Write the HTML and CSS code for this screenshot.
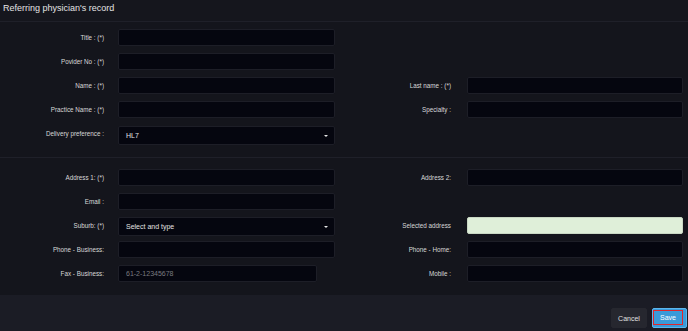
FILE: index.html
```html
<!DOCTYPE html>
<html lang="en">
<head>
  <meta charset="UTF-8" />
  <title>Referring physician's record</title>
  <link rel="stylesheet" href="styles.css">
</head>
<body>
  <div class="modal">
    <div class="modal-header">Referring physician's record</div>

    <div class="form-section first">
      <label class="lbl">Title : (*)</label>
      <div class="field"><input type="text"></div>
      <div class="blank"></div><div class="blank"></div>

      <label class="lbl">Povider No : (*)</label>
      <div class="field"><input type="text"></div>
      <div class="blank"></div><div class="blank"></div>

      <label class="lbl">Name : (*)</label>
      <div class="field"><input type="text"></div>
      <label class="lbl right">Last name : (*)</label>
      <div class="field"><input type="text"></div>

      <label class="lbl">Practice Name : (*)</label>
      <div class="field"><input type="text"></div>
      <label class="lbl right">Specialty :</label>
      <div class="field"><input type="text"></div>

      <label class="lbl">Delivery preference :</label>
      <div class="field">
        <div class="select sel-first">
          <span>HL7</span>
          <svg width="4" height="2" viewBox="0 0 4 2"><path d="M0 0h4L2 2z" fill="#e6e6e6"/></svg>
        </div>
      </div>
      <div class="blank"></div><div class="blank"></div>
    </div>

    <div class="form-section second">
      <label class="lbl">Address 1: (*)</label>
      <div class="field"><input type="text"></div>
      <label class="lbl right">Address 2:</label>
      <div class="field"><input type="text"></div>

      <label class="lbl">Email :</label>
      <div class="field"><input type="text"></div>
      <div class="blank"></div><div class="blank"></div>

      <label class="lbl">Suburb: (*)</label>
      <div class="field">
        <div class="select">
          <span>Select and type</span>
          <svg width="4" height="2" viewBox="0 0 4 2"><path d="M0 0h4L2 2z" fill="#e6e6e6"/></svg>
        </div>
      </div>
      <label class="lbl right">Selected address</label>
      <div class="field"><input type="text" class="selected"></div>

      <label class="lbl">Phone - Business:</label>
      <div class="field"><input type="text"></div>
      <label class="lbl right">Phone - Home:</label>
      <div class="field"><input type="text"></div>

      <label class="lbl">Fax - Business:</label>
      <div class="field"><input type="text" class="fax" placeholder="61-2-12345678"></div>
      <label class="lbl right">Mobile :</label>
      <div class="field"><input type="text"></div>
    </div>

    <div class="modal-footer">
      <button class="btn cancel">Cancel</button>
      <button class="btn save"><span class="focus-box">Save</span></button>
    </div>
  </div>
</body>
</html>
```

FILE: styles.css
```css
body {
  margin: 0;
  background: #14151c;
  font-family: 'Liberation Sans', Arial, sans-serif;
  color: #d2d2d2;
}
.modal {
  width: 688px;
  height: 331px;
  display: flex;
  flex-direction: column;
  background: #14151c;
}
.modal-header {
  height: 22px;
  line-height: 17px;
  padding-left: 3px;
  font-size: 9px;
  color: #e4e4e4;
  background: #15161d;
  border-bottom: 1px solid #1f2029;
  box-sizing: border-box;
}
.form-section {
  display: grid;
  grid-template-columns: 118px 217px 132px 216px;
  grid-auto-rows: 24px;
  align-items: start;
}
.form-section.first {
  padding: 7px 0 8px;
  border-bottom: 1px solid #1f2029;
}
.form-section.second {
  padding: 11px 0 0;
  flex: 1;
}
.lbl {
  font-size: 6.3px;
  line-height: 17px;
  text-align: right;
  padding-right: 14px;
  color: #d8d8d8;
  white-space: nowrap;
}
.lbl.right {
  padding-right: 16px;
}
.field input {
  display: block;
  width: 100%;
  height: 17px;
  box-sizing: border-box;
  background: #05060f;
  border: 1px solid #1d1e27;
  border-radius: 2px;
  padding: 0 7px;
  font-family: inherit;
  font-size: 7px;
  color: #d0d0d0;
  outline: none;
}
.field input::placeholder {
  color: #7a7a80;
}
.field input.fax {
  width: 199px;
}
.field input.selected {
  background: #dfefd9;
  border-color: #c9d8c4;
}
.select {
  height: 19px;
  box-sizing: border-box;
  background: #05060f;
  border: 1px solid #1d1e27;
  border-radius: 2px;
  padding: 0 6px 0 7px;
  display: flex;
  align-items: center;
  justify-content: space-between;
  font-size: 7px;
  color: #e2e2e2;
}
.select.sel-first {
  margin-top: 1px;
}
.modal-footer {
  height: 36px;
  background: #1b1c25;
  display: flex;
  justify-content: flex-end;
  align-items: flex-start;
  gap: 5px;
  padding: 13px 1px 0 0;
  box-sizing: border-box;
}
.btn {
  height: 20px;
  border-radius: 2px;
  font-family: inherit;
  font-size: 7px;
  padding: 0;
  cursor: pointer;
}
.cancel {
  width: 36px;
  background: #26272f;
  border: 1px solid #26272f;
  color: #e0e0e0;
}
.save {
  width: 35px;
  background: #3a9ad9;
  border: 1px solid #5cb6ee;
  color: #ffffff;
  display: flex;
  align-items: flex-start;
  justify-content: flex-start;
}
.focus-box {
  display: flex;
  align-items: center;
  justify-content: center;
  width: 30px;
  height: 15px;
  box-sizing: border-box;
  border: 1px solid #e0262b;
  margin-top: 1px;
}
```
